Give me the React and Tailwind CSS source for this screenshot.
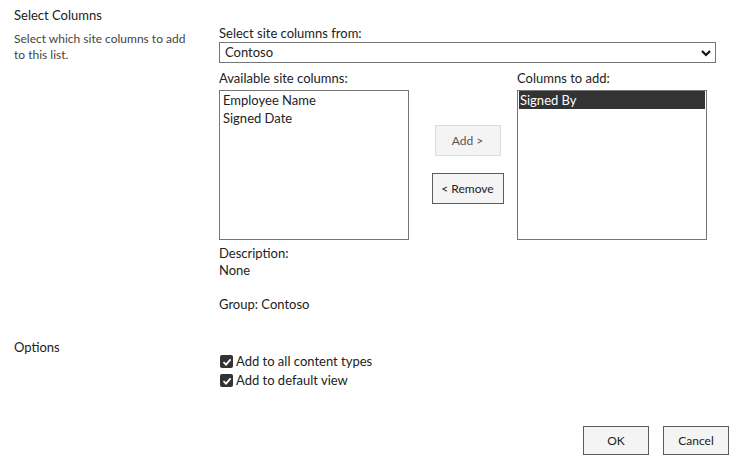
import React from 'react';

const FONT = { fontFamily: 'Lato, "Noto Sans", sans-serif' };

function Check() {
  return (
    <span className="w-[13px] h-[13px] rounded-[2px] bg-[#333] flex items-center justify-center shrink-0">
      <svg width="10" height="10" viewBox="0 0 10 10">
        <path d="M1.5 5.2 L4 7.6 L8.6 2.4" fill="none" stroke="#fff" strokeWidth="1.8" />
      </svg>
    </span>
  );
}

function ListBox({ items, selected }) {
  return (
    <div className="w-[190px] h-[150px] mt-[4px] border border-[#767676] bg-white px-[1px] text-[13px] leading-[18px] text-[#222]">
      {items.map((it) => (
        <div
          key={it}
          className={it === selected ? 'bg-[#333] text-white pl-[1px]' : 'pl-[2px]'}
        >
          {it}
        </div>
      ))}
    </div>
  );
}

export default function App() {
  return (
    <div className="w-[734px] h-[460px] bg-white flex flex-col text-[#222]" style={FONT}>
      <div className="flex">
        <div className="w-[219px] pl-[14px] pt-[7px]">
          <div className="text-[13px] leading-[16px] text-[#222]">Select Columns</div>
          <p className="mt-[8px] text-[12px] leading-[16px] text-[#444] w-[178px]">
            Select which site columns to add to this list.
          </p>
        </div>

        <div className="w-[497px] pt-[25px]">
          <div className="text-[13px] leading-[16px]">Select site columns from:</div>
          <div className="mt-[1px] h-[21px] border border-[#767676] flex items-center justify-between pl-[5px] pr-[3px] text-[13px]">
            <span>Contoso</span>
            <svg width="12" height="10" viewBox="0 0 12 10">
              <path d="M2 3 L6 7 L10 3" fill="none" stroke="#111" strokeWidth="2.2" />
            </svg>
          </div>

          <div className="mt-[7px] flex">
            <div className="w-[190px]">
              <div className="text-[13px] leading-[16px]">Available site columns:</div>
              <ListBox items={['Employee Name', 'Signed Date']} />
            </div>

            <div className="w-[108px] flex flex-col items-center pt-[55px] pl-[9px] gap-[17px]">
              <button className="w-[66px] h-[31px] bg-[#f4f4f4] border border-[#dcdcdc] text-[12px] text-[#555]">
                Add &gt;
              </button>
              <button className="w-[72px] h-[31px] bg-[#f4f4f4] border border-[#5c5c5c] text-[12px] text-[#222]">
                &lt; Remove
              </button>
            </div>

            <div className="w-[190px]">
              <div className="text-[13px] leading-[16px]">Columns to add:</div>
              <ListBox items={['Signed By']} selected="Signed By" />
            </div>
          </div>

          <div className="mt-[5px] text-[13px] leading-[17px]">
            <div>Description:</div>
            <div>None</div>
            <div className="mt-[17px]">Group: Contoso</div>
          </div>
        </div>
      </div>

      <div className="flex mt-[26px]">
        <div className="w-[219px] pl-[14px]">
          <div className="text-[13px] leading-[16px]">Options</div>
        </div>
        <div className="pt-[16px] pl-[1px] flex flex-col gap-[6px] text-[13px] leading-[13px]">
          <label className="flex items-center gap-[3px]">
            <Check />
            <span>Add to all content types</span>
          </label>
          <label className="flex items-center gap-[3px]">
            <Check />
            <span>Add to default view</span>
          </label>
        </div>
      </div>

      <div className="mt-auto mb-[5px] flex justify-end gap-[14px] pr-[5px]">
        <button className="w-[66px] h-[29px] bg-[#f4f4f4] border border-[#5c5c5c] text-[12px] text-[#222]">
          OK
        </button>
        <button className="w-[66px] h-[29px] bg-[#f4f4f4] border border-[#5c5c5c] text-[12px] text-[#222]">
          Cancel
        </button>
      </div>
    </div>
  );
}
